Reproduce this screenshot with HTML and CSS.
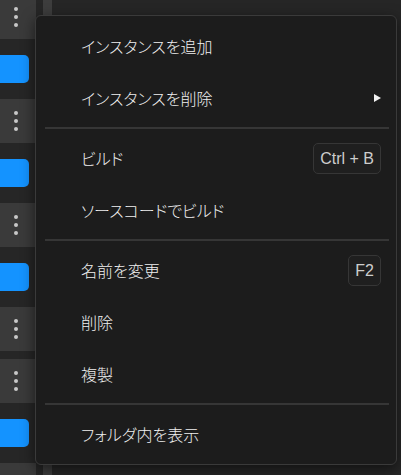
FILE: index.html
```html
<!DOCTYPE html>
<html lang="ja">
<head>
  <meta charset="UTF-8">
  <title>Context menu</title>
  <meta name="viewport" content="width=device-width, initial-scale=1.0">
  <link rel="stylesheet" href="styles.css">
</head>
<body>

  <div class="workspace">
    <div class="list">
      <div class="item">
        <div class="item-head"><span class="kebab"><i></i><i></i><i></i></span></div>
        <div class="item-body"><div class="bar"></div></div>
      </div>
      <div class="item">
        <div class="item-head"><span class="kebab"><i></i><i></i><i></i></span></div>
        <div class="item-body"><div class="bar"></div></div>
      </div>
      <div class="item">
        <div class="item-head"><span class="kebab"><i></i><i></i><i></i></span></div>
        <div class="item-body"><div class="bar"></div></div>
      </div>
      <div class="item">
        <div class="item-head"><span class="kebab"><i></i><i></i><i></i></span></div>
      </div>
      <div class="item">
        <div class="item-head"><span class="kebab"><i></i><i></i><i></i></span></div>
        <div class="item-body"><div class="bar"></div></div>
      </div>
      <div class="item">
        <div class="item-head"><span class="kebab"><i></i><i></i><i></i></span></div>
      </div>
    </div>
    <div class="scroll-strip"></div>
    <div class="pane"></div>
  </div>

  <ul class="menu">
    <li class="menu-item">インスタンスを追加</li>
    <li class="menu-item">インスタンスを削除<span class="arrow"></span></li>
    <li class="menu-sep"></li>
    <li class="menu-item">ビルド<span class="key">Ctrl + B</span></li>
    <li class="menu-item">ソースコードでビルド</li>
    <li class="menu-sep"></li>
    <li class="menu-item">名前を変更<span class="key">F2</span></li>
    <li class="menu-item">削除</li>
    <li class="menu-item">複製</li>
    <li class="menu-sep"></li>
    <li class="menu-item">フォルダ内を表示</li>
  </ul>

</body>
</html>
```

FILE: styles.css
```css
* {
  box-sizing: border-box;
}

html, body {
  height: 100%;
}

body {
  margin: 0;
  background: #262626;
  font-family: "Noto Sans CJK JP", "Noto Sans", sans-serif;
  overflow: hidden;
}

.workspace {
  display: flex;
  height: 100%;
  overflow: hidden;
}

.list {
  width: 36px;
  margin-top: -5px;
  flex-shrink: 0;
}

.item {
  margin-bottom: 8px;
}

.item-head {
  height: 44px;
  background: #3a3a3a;
  display: flex;
  align-items: center;
  justify-content: center;
  padding-right: 4px;
}

.kebab {
  display: flex;
  flex-direction: column;
  gap: 4px;
}

.kebab i {
  display: block;
  width: 4px;
  height: 4px;
  border-radius: 50%;
  background: #c8c8c8;
}

.item-body {
  padding: 16px 0 8px;
}

.bar {
  width: 29px;
  height: 28px;
  background: #1493ff;
  border-radius: 0 5px 5px 0;
}

.scroll-strip {
  width: 9px;
  margin-left: 7px;
  background: #3d3d3d;
}

.pane {
  flex: 1;
}

.menu {
  position: absolute;
  left: 35px;
  top: 15px;
  width: 362px;
  margin: 0;
  padding: 4px 0;
  list-style: none;
  background: #1c1c1c;
  border: 1px solid #3a3a3a;
  border-radius: 6px;
  box-shadow: 0 4px 14px rgba(0, 0, 0, 0.55);
}

.menu-item {
  height: 52px;
  display: flex;
  align-items: center;
  justify-content: space-between;
  padding: 0 15px 0 45px;
  color: #f0f0f0;
  font-size: 16px;
  font-weight: 300;
  font-feature-settings: "palt";
}

.menu-sep {
  height: 8px;
  display: flex;
  align-items: center;
  padding: 0 7px 0 9px;
}

.menu-sep::before {
  content: "";
  flex: 1;
  height: 2px;
  background: #363636;
}

.arrow {
  width: 0;
  height: 0;
  border-top: 4px solid transparent;
  border-bottom: 4px solid transparent;
  border-left: 7px solid #f2f2f2;
}

.key {
  font-family: "Liberation Sans", Arial, sans-serif;
  font-size: 16px;
  font-weight: 400;
  font-feature-settings: normal;
  color: #cdcdcd;
  height: 31px;
  line-height: 29px;
  padding: 0 6px;
  border: 1px solid #363636;
  border-radius: 5px;
  background: #1f1f1f;
}
```
